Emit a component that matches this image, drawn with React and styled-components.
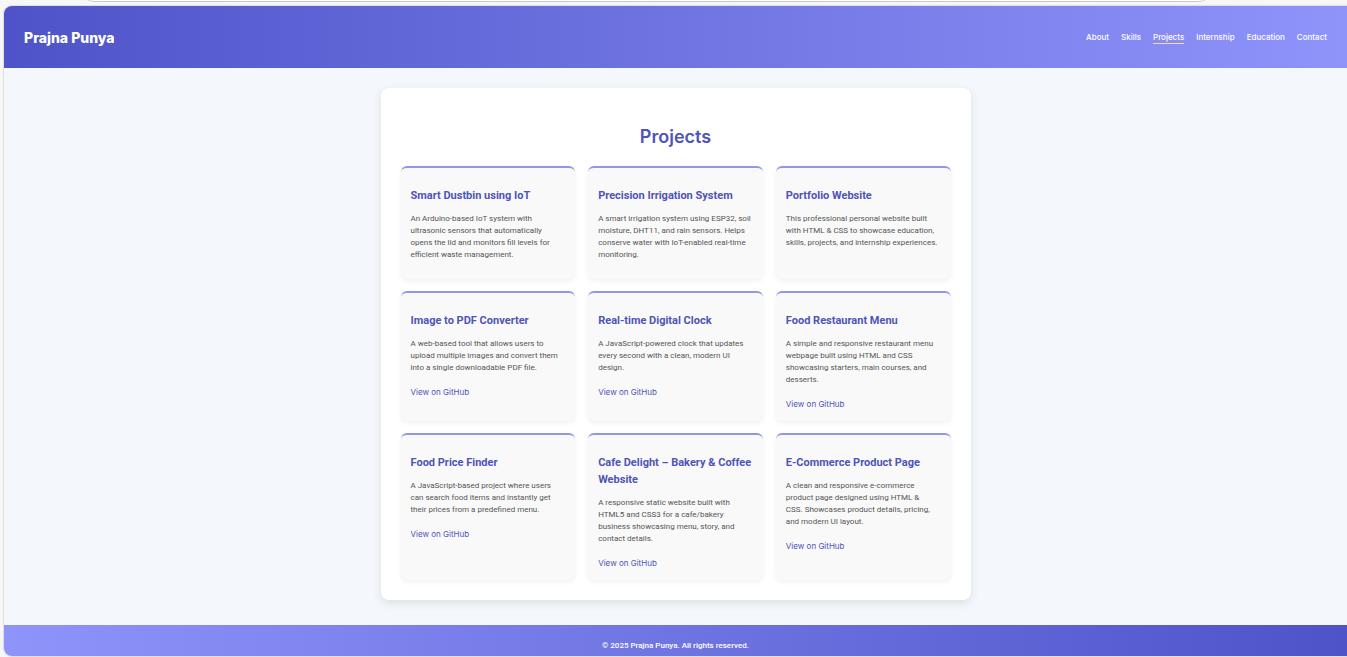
import React from "react";
import styled, { createGlobalStyle } from "styled-components";

const GlobalStyle = createGlobalStyle`
  * { box-sizing: border-box; }
  body {
    margin: 0;
    background: #f7f7f7;
    font-family: Inter, "Liberation Sans", sans-serif;
    font-size: 8px;
    line-height: 12px;
    color: #555;
  }
`;

const compactFont = `Roboto, Inter, sans-serif`;

const Frame = styled.div`
  display: flex;
  flex-direction: column;
  min-height: 100vh;
  padding: 0 0 1px 4px;
`;

const AddressBar = styled.div`
  height: 2px;
  margin: 0 142px 4px 84px;
  border: 1px solid #c3c7cf;
  border-top: 0;
  border-radius: 0 0 12px 12px / 0 0 2px 2px;
  background: #fff;
`;

const Page = styled.div`
  flex: 1;
  display: flex;
  flex-direction: column;
  overflow: hidden;
  border-radius: 8px 0 0 8px;
  background: #f4f7fc;
  box-shadow: 0 0 1px 1px #dcdce4;
`;

const Header = styled.header`
  display: flex;
  align-items: center;
  justify-content: space-between;
  height: 62px;
  padding: 0 20px;
  background: linear-gradient(90deg, #4e54c8, #8f94fb);
  color: #fff;
`;

const Brand = styled.div`
  padding-top: 2px;
  font-size: 14px;
  line-height: 22px;
  font-weight: 800;
`;

const Nav = styled.nav`
  display: flex;
  gap: 12px;
`;

const NavLink = styled.a`
  border-bottom: 1px solid ${(p) => (p.$active ? "#ffd98a" : "transparent")};
  color: #fff;
  font-weight: 500;
  text-decoration: none;
`;

const Main = styled.main`
  flex: 1;
  padding: 20px 20px 25px;
`;

const Panel = styled.section`
  max-width: 590px;
  margin: 0 auto;
  padding: 20px;
  border-radius: 8px;
  background: #fff;
  box-shadow: 0 3px 10px rgba(0, 0, 0, 0.1);
`;

const Heading = styled.h1`
  margin: 15px 0;
  font-size: 18px;
  line-height: 28px;
  font-weight: 600;
  text-align: center;
  color: #4e54b8;
`;

const Grid = styled.div`
  display: grid;
  grid-template-columns: repeat(3, 1fr);
  gap: 12px 13px;
`;

const Card = styled.article`
  padding: 10px;
  border-top: 2px solid #9396e6;
  border-radius: 6px;
  background: #f9f9f9;
  box-shadow: 0 2px 5px rgba(0, 0, 0, 0.06);
`;

const CardTitle = styled.h2`
  margin: 9px 0;
  font-family: ${compactFont};
  font-size: 11px;
  line-height: 17px;
  font-weight: 700;
  color: #4e54b8;
`;

const Description = styled.p`
  margin: 0 0 8px;
  font-family: ${compactFont};
`;

const RepoLink = styled.a`
  display: inline-block;
  margin-top: 4px;
  line-height: 13px;
  vertical-align: top;
  color: #4e54b8;
  text-decoration: none;
`;

const Footer = styled.footer`
  padding: 14px 20px 4px;
  background: linear-gradient(90deg, #8f94fb, #4e54c8);
  color: #fff;
  font-family: ${compactFont};
  font-weight: 500;
  line-height: 13px;
  text-align: center;
`;

const sections = ["About", "Skills", "Projects", "Internship", "Education", "Contact"];

const projects = [
  { title: "Smart Dustbin using IoT", text: "An Arduino-based IoT system with ultrasonic sensors that automatically opens\u00a0the lid and monitors fill levels for efficient waste management." },
  { title: "Precision Irrigation System", text: "A smart irrigation system using ESP32, soil moisture, DHT11, and rain sensors. Helps conserve water with IoT-enabled real-time monitoring." },
  { title: "Portfolio Website", text: "This professional personal website built with HTML & CSS to showcase education, skills, projects, and internship experiences." },
  { title: "Image to PDF Converter", text: "A web-based tool that allows users to upload multiple images and convert them into a single downloadable PDF file.", repo: true },
  { title: "Real-time Digital Clock", text: "A JavaScript-powered clock that updates every second with a clean, modern UI design.", repo: true },
  { title: "Food Restaurant Menu", text: "A simple and responsive restaurant menu webpage built using HTML and CSS showcasing starters, main courses, and desserts.", repo: true },
  { title: "Food Price Finder", text: "A JavaScript-based project where users can search food items and instantly get their prices from a predefined menu.", repo: true },
  { title: "Cafe Delight – Bakery & Coffee Website", text: "A responsive static website built with HTML5 and CSS3 for a cafe/bakery business showcasing menu, story, and contact details.", repo: true },
  { title: "E-Commerce Product Page", text: "A clean and responsive e-commerce product page designed using HTML & CSS.\u00a0Showcases product details, pricing, and modern UI layout.", repo: true },
];

export default function App() {
  return (
    <>
      <GlobalStyle />
      <Frame>
        <AddressBar />
        <Page>
          <Header>
            <Brand>Prajna Punya</Brand>
            <Nav>
              {sections.map((name) => (
                <NavLink key={name} href={"#" + name.toLowerCase()} $active={name === "Projects"}>
                  {name}
                </NavLink>
              ))}
            </Nav>
          </Header>
          <Main>
            <Panel>
              <Heading>Projects</Heading>
              <Grid>
                {projects.map((project) => (
                  <Card key={project.title}>
                    <CardTitle>{project.title}</CardTitle>
                    <Description>{project.text}</Description>
                    {project.repo && <RepoLink href="#github">View on GitHub</RepoLink>}
                  </Card>
                ))}
              </Grid>
            </Panel>
          </Main>
          <Footer>© 2025 Prajna Punya. All rights reserved.</Footer>
        </Page>
      </Frame>
    </>
  );
}
